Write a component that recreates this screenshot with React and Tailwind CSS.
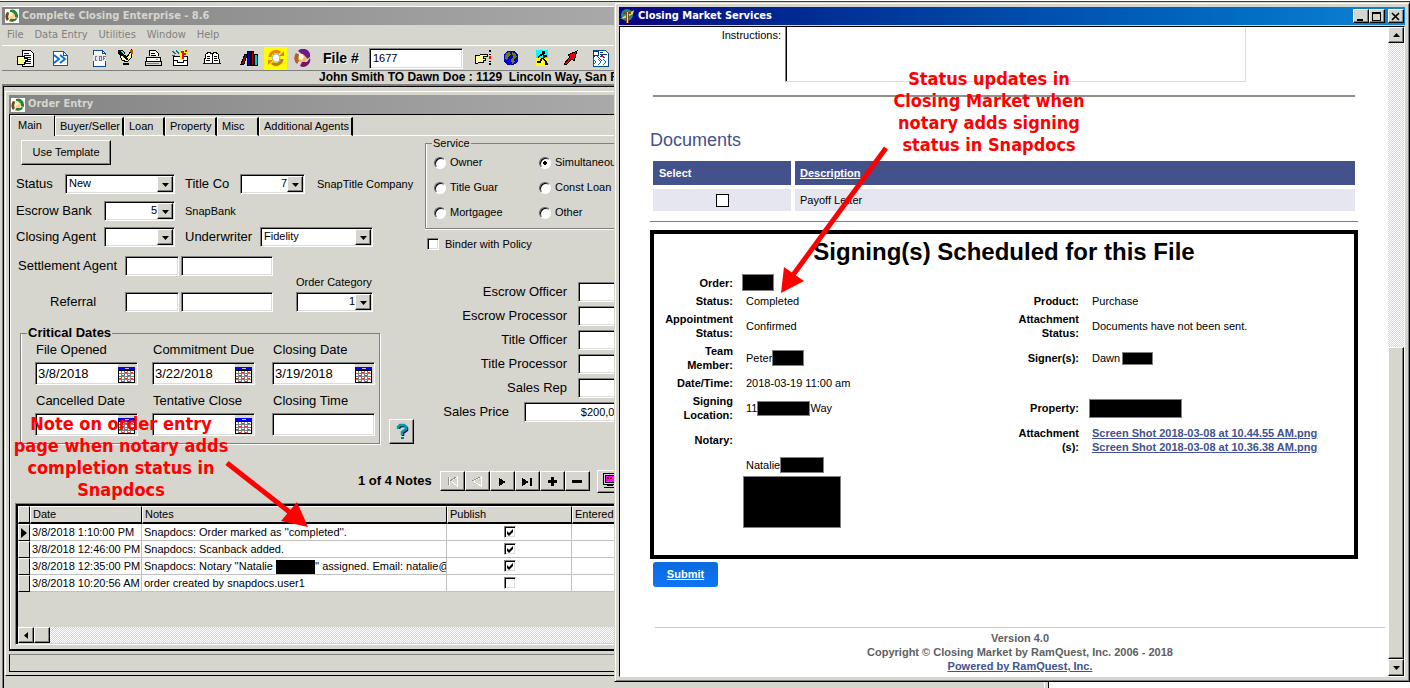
import React from "react";

const raised =
  "border border-t-white border-l-white border-r-black border-b-black shadow-[inset_-1px_-1px_0_#808080] bg-[#d6d6ce]";
const sunken =
  "border border-t-[#808080] border-l-[#808080] border-r-white border-b-white shadow-[inset_1px_1px_0_#000,inset_-1px_-1px_0_#dcdcdc] bg-white";
const tahoma = "font-['DejaVu_Sans_Condensed','DejaVu_Sans',sans-serif]";
const track =
  "bg-[repeating-conic-gradient(#ffffff_0_25%,#d6d6ce_0_50%)] bg-[length:2px_2px]";

/* ---------- icons ---------- */

function Icon({ children, size = 18 }) {
  return (
    <svg
      width={size}
      height={size}
      viewBox="0 0 18 18"
      shapeRendering="crispEdges"
      aria-hidden="true"
      className="shrink-0"
    >
      {children}
    </svg>
  );
}

function AppLogo() {
  return (
    <svg width="14" height="14" viewBox="0 0 14 14" aria-hidden="true" className="shrink-0">
      <rect width="14" height="14" fill="#fff" />
      <path d="M5 1a6 6 0 0 1 8 5v3l-3-1-1-3-4-2z" fill="#1f8a34" />
      <path d="M12 10a6 6 0 0 1-8 2l2-3 4 1 1-2z" fill="#2a7a2a" />
      <path d="M2 12a7 7 0 0 1 0-9l3 1-2 4 1 2z" fill="#6b4a1d" />
      <path d="M4 4l3-1 3 3-1 4-4 0-2-2z" fill="#f6cf8a" />
      <path d="M4 4l2-1 2 2-1 2-3 1z" fill="#fff4d8" />
    </svg>
  );
}

function MarketLogo() {
  return (
    <svg width="15" height="16" viewBox="0 0 15 16" aria-hidden="true" className="shrink-0">
      <circle cx="7" cy="7" r="6" fill="#1d8a86" />
      <path d="M0 11 L14 2 L13 6 L5 10z" fill="#e8e23a" />
      <path d="M3 4h8v2h-2v9H6V6H3z" fill="#7a4a22" />
      <path d="M7 4h1v11H7z" fill="#f0d890" />
    </svg>
  );
}

const icons = {
  listHand: (
    <Icon>
      <path d="M6 1h8l3 3v13H6z" fill="#fff" stroke="#000" />
      <path d="M8 4h5M8 6h7M9 8h6M9 10h6M9 12h6M9 14h6" stroke="#0000c0" />
      <path d="M1 7h7v2h3v2h-2v2h-1v2H1z" fill="#fff" stroke="#000" />
      <path d="M2 9h6v5H2z" fill="#ffff80" />
    </Icon>
  ),
  fastDoc: (
    <Icon>
      <path d="M2 2h10l4 4v10H2z" fill="#fff" stroke="#0a5aa8" />
      <path d="M12 2v4h4" fill="none" stroke="#0a5aa8" />
      <g shapeRendering="auto" fill="none" stroke="#0a6fd0" strokeWidth="2">
        <path d="M3 6l5 4-5 4M9 6l5 4-5 4" />
      </g>
    </Icon>
  ),
  cdf: (
    <Icon>
      <path d="M3 1h9l3 3v13H3z" fill="#fff" stroke="#0a4a98" />
      <path d="M12 1v3h3" fill="none" stroke="#0a4a98" />
      <rect x="3" y="6" width="13" height="6" fill="#e8e8f0" />
      <path d="M7 7H5v4h2M9 7v4h2V7H9M13 11V7h3M13 9h2" fill="none" stroke="#77777f" />
    </Icon>
  ),
  pencilHand: (
    <Icon>
      <path d="M1 1h4l3 3-3 3-4-3z" fill="#0ff" stroke="#000" />
      <path d="M14 2v7l-4 4-5-2-2-4 4-1 3 2z" fill="#ffffa0" stroke="#000" />
      <path d="M13 1h3v4h-2z" fill="#c05000" />
      <path d="M2 2l9 9" stroke="#000" strokeWidth="2" />
      <path d="M6 14h6v2H6z" fill="#000" />
    </Icon>
  ),
  printer: (
    <Icon>
      <path d="M5 7V1h6l3 3v3" fill="#fff" stroke="#000" />
      <path d="M7 4h4M7 6h5" stroke="#000" />
      <path d="M2 8h14v4H2z" fill="#fff" stroke="#000" />
      <path d="M1 12h16v4H1z" fill="#d6d6ce" stroke="#000" />
      <path d="M12 10h2" stroke="#c0a000" />
      <path d="M3 14h12" stroke="#808080" />
    </Icon>
  ),
  inbox: (
    <Icon>
      <path d="M2 7h14v9H2z" fill="#fff" stroke="#000" />
      <path d="M2 11h4v2h6v-2h4" fill="none" stroke="#000" />
      <path d="M9 3l4-2 4 1-3 4-2 5h-3V7z" fill="#ffff00" />
      <path d="M10 3h2v2h3M12 6v4M16 2h-2" fill="none" stroke="#f00" strokeWidth="2" />
      <path d="M1 2l4 3M5 1l3 4M1 6h3" stroke="#008080" />
    </Icon>
  ),
  openBook: (
    <Icon>
      <path d="M3 5l3-2 3 2 3-2 3 2 2 9H1z" fill="#fff" stroke="#000" />
      <path d="M9 5v9M4 7h3M4 9h3M3 11h4M11 7h3M11 9h3M11 11h4" stroke="#000" />
      <path d="M1 14h6l2 1 2-1h6" fill="none" stroke="#0000ff" />
    </Icon>
  ),
  books: (
    <Icon>
      <path d="M1 15l4-10 2 1-3 9z" fill="#a00000" stroke="#000" />
      <path d="M7 2h3v14H7z" fill="#0000d0" stroke="#000" />
      <path d="M11 2h2v14h-2z" fill="#a00000" stroke="#000" />
      <path d="M14 5h3v11h-3z" fill="#00c8c8" stroke="#000" />
    </Icon>
  ),
  refresh: (
    <Icon>
      <g shapeRendering="auto">
        <path d="M3 8a6 6 0 0 1 10-4" fill="none" stroke="#f08000" strokeWidth="3" />
        <path d="M15 10a6 6 0 0 1-10 4" fill="none" stroke="#c87820" strokeWidth="3" />
        <path d="M12 7h5V2zM6 11H1v5z" fill="#f08000" />
        <path d="M7 5h4l2 3-1 5H7L5 9z" fill="#fff" stroke="#5090c0" strokeWidth="0.7" />
      </g>
    </Icon>
  ),
  swirl: (
    <Icon>
      <g shapeRendering="auto">
        <path d="M5 2a7 7 0 0 1 12 6l-3 2-4-4z" fill="#6a1a8a" />
        <path d="M17 9a7 7 0 0 1-10 8l2-4 5 0z" fill="#7a1070" />
        <path d="M4 15a8 8 0 0 1-1-11l4 2-1 6z" fill="#b0602a" />
        <path d="M6 5l4 0 4 4-2 4-5 0-2-3z" fill="#f6b860" />
        <path d="M6 5l3 0 2 3-2 3-3-1z" fill="#fff8e0" />
      </g>
    </Icon>
  ),
  pointHand: (
    <Icon>
      <path d="M1 6h5l2-1h5v2H9v2h2v2H9v2H6L4 14H1z" fill="#ffffa0" stroke="#000" />
      <path d="M16 1v2M16 5v1M16 12v1M16 14v2" stroke="#000" strokeWidth="2" />
      <path d="M16 7v3" stroke="#f00" strokeWidth="2" />
    </Icon>
  ),
  globe: (
    <Icon>
      <circle cx="9" cy="9" r="7.5" fill="#0000d8" />
      <path d="M4 4l4-1 1 3-3 2-1 4-2-3zM10 3l4 2 1 3-3 2 1 3-3 2-1-5 2-2z" fill="#6b7a10" />
    </Icon>
  ),
  runner: (
    <Icon>
      <path d="M3 1h12v8H3z" fill="#0ff" />
      <path d="M3 9h12v8H3z" fill="#ff0" />
      <path d="M9 2h3v3H9z" fill="#000" />
      <path d="M8 6l2-1 1 4M10 9l3 4v2h2M9 9l-2 4H4M5 8l3-2M11 7h3" fill="none" stroke="#000" strokeWidth="1.5" />
    </Icon>
  ),
  redArrow: (
    <Icon>
      <path d="M15 2L6 6l2 2-6 7 2 1 6-6 2 2z" fill="#e80000" stroke="#000" />
    </Icon>
  ),
  searchDoc: (
    <Icon>
      <path d="M2 1h12l3 3v13H2z" fill="#fff" stroke="#0a4a88" />
      <path d="M2 2h5v4H2zM9 3h3M9 5h4M9 7h3M4 6l-2 3M6 7l5 5M13 5h3" fill="none" stroke="#0a3a78" />
      <path d="M10 6l4 3" stroke="#e00" />
      <path d="M2 10l3 3-3 3M7 10l3 3-3 3M12 10l3 3-3 3" fill="none" stroke="#0a6fd0" />
    </Icon>
  ),
  monitor: (
    <Icon>
      <path d="M2 1h13v11H2z" fill="#d6d6ce" stroke="#000" />
      <path d="M4 3h9v7H4z" fill="#0c0" stroke="#000" />
      <path d="M5 4h7v5H5z" fill="#f0f" />
      <path d="M6 5h2v2H6zM9 5h2v2H9z" fill="#800" />
      <path d="M6 13h6v1H6zM3 15h12v1H3z" fill="#000" />
    </Icon>
  ),
};

function Calendar() {
  return (
    <svg width="17" height="17" viewBox="0 0 17 17" shapeRendering="crispEdges" aria-hidden="true">
      <rect x="0" y="1" width="17" height="16" fill="#000" />
      <rect x="1" y="5" width="15" height="11" fill="#fff" />
      <rect x="0" y="1" width="17" height="3" fill="#0000ff" />
      <rect x="7" y="2" width="4" height="1" fill="#c0c0ff" />
      <path
        d="M3.500 5v11M6.500 5v11M9.500 5v11M12.500 5v11M1 7.500h15M1 10.500h15M1 13.500h15"
        stroke="#808080"
      />
      <path
        d="M4 9h2M7 6h2M10 9h2M13 6h2M4 15h2M7 12h2M10 15h2M13 12h2M1 12h2"
        stroke="#f03030"
      />
    </svg>
  );
}

function Triangle({ dir = "down" }) {
  const d = {
    down: "M1 3h7L4.500 7z",
    up: "M1 6h7L4.500 2z",
    left: "M6 1v7L2 4.500z",
  }[dir];
  return (
    <svg width="9" height="9" viewBox="0 0 9 9" aria-hidden="true">
      <path d={d} fill="#000" />
    </svg>
  );
}

/* ---------- form controls ---------- */

function Dropdown({ label, value, className, right }) {
  return (
    <span className={`relative block h-5 shrink-0 ${sunken} ${className}`}>
      <select
        aria-label={label}
        defaultValue={value}
        className={`block h-[17px] w-full appearance-none bg-transparent pl-[3px] pr-[17px] text-[11px] leading-[17px] outline-none ${
          right ? "text-right" : ""
        }`}
      >
        <option>{value}</option>
      </select>
      <span
        className={`pointer-events-none absolute right-px top-px bottom-px flex w-4 items-center justify-center ${raised}`}
      >
        <Triangle />
      </span>
    </span>
  );
}

function Field({ label, value = "", className = "" }) {
  return (
    <input
      aria-label={label}
      defaultValue={value}
      className={`h-5 shrink-0 px-[3px] text-[11px] outline-none ${sunken} ${className}`}
    />
  );
}

function DateField({ id, label, value, plain }) {
  return (
    <div>
      <label htmlFor={id} className="block h-[18px] pl-px leading-[18px] text-[13px]">
        {label}
      </label>
      <div className={`mt-[3px] flex h-[23px] w-[103px] items-center ${sunken}`}>
        <input
          id={id}
          defaultValue={value}
          className="min-w-0 flex-1 bg-transparent pl-[2px] text-[13px] outline-none"
        />
        {!plain && (
          <button aria-label={`Pick ${label}`} className="mr-px flex h-[19px] w-[18px] items-end bg-[#d6d6ce]">
            <Calendar />
          </button>
        )}
      </div>
    </div>
  );
}

function Radio({ label, checked }) {
  return (
    <label className="flex h-[25px] items-center gap-1">
      <input
        type="radio"
        name="service"
        defaultChecked={checked}
        className="h-3 w-3 shrink-0 appearance-none rounded-full border border-t-[#606060] border-l-[#606060] border-r-white border-b-white bg-white shadow-[inset_1px_1px_0_#000] checked:bg-[radial-gradient(circle,#000_2px,#fff_2px)]"
      />
      {label}
    </label>
  );
}

function Check({ label, checked }) {
  return (
    <span className="relative block h-3 w-3 shrink-0">
      <input
        type="checkbox"
        aria-label={label}
        defaultChecked={checked}
        className={`peer block h-3 w-3 appearance-none ${sunken}`}
      />
      <svg
        viewBox="0 0 12 12"
        className="pointer-events-none absolute inset-0 hidden h-3 w-3 peer-checked:block"
        aria-hidden="true"
      >
        <path d="M3 5l2 2 4-4v3L5 10 3 8z" fill="#000" />
      </svg>
    </span>
  );
}

/* ---------- Complete Closing Enterprise ---------- */

function Toolbar() {
  return (
    <div className="flex h-[25px] items-center border-t border-white pl-[14px]">
      <button aria-label="Order list">{icons.listHand}</button>
      <button aria-label="Forward document" className="ml-[17px]">{icons.fastDoc}</button>
      <button aria-label="CDF" className="ml-[21px]">{icons.cdf}</button>
      <button aria-label="Sign" className="ml-[9px]">{icons.pencilHand}</button>
      <button aria-label="Print" className="ml-[9px]">{icons.printer}</button>
      <button aria-label="Inbox" className="ml-[9px]">{icons.inbox}</button>
      <button aria-label="Open book" className="ml-[14px]">{icons.openBook}</button>
      <button aria-label="Library" className="ml-[19px]">{icons.books}</button>
      <button aria-label="Refresh" className="ml-[6px] flex h-[23px] w-[23px] items-center justify-center bg-[#ffff00]">
        {icons.refresh}
      </button>
      <button aria-label="Sync" className="ml-[6px]">{icons.swirl}</button>
      <label htmlFor="file-no" className="ml-3 w-[46px] text-[14px] font-bold [text-shadow:1px_1px_0_#fff]">
        File #
      </label>
      <input
        id="file-no"
        defaultValue="1677"
        className={`h-[21px] w-[94px] px-[3px] text-[11px] outline-none ${sunken}`}
      />
      <button aria-label="Point" className="ml-[11px]">{icons.pointHand}</button>
      <button aria-label="Web" className="ml-[10px]">{icons.globe}</button>
      <button aria-label="Exit" className="ml-[13px]">{icons.runner}</button>
      <button aria-label="Arrow" className="ml-[11px]">{icons.redArrow}</button>
      <button aria-label="Search documents" className="ml-[11px]">{icons.searchDoc}</button>
    </div>
  );
}

const tabs = [
  { label: "Buyer/Seller", cls: "w-[69px]" },
  { label: "Loan", cls: "w-[41px]" },
  { label: "Property", cls: "w-[52px]" },
  { label: "Misc", cls: "w-[42px]" },
  { label: "Additional Agents", cls: "w-[94px]" },
];

function TabRow() {
  return (
    <div className="flex h-[21px] items-end border-l border-white text-[11px]">
      <button className="h-[21px] w-[44px] border-r border-t border-r-black border-t-white pl-[7px] pb-[2px] text-left">
        Main
      </button>
      {tabs.map((t) => (
        <button
          key={t.label}
          className={`h-[19px] shrink-0 whitespace-nowrap border-b border-l border-r-2 border-t border-b-white border-l-white border-r-black border-t-white pl-[4px] text-left ${t.cls}`}
        >
          {t.label}
        </button>
      ))}
      <div className="h-px flex-1 bg-white" />
    </div>
  );
}

const officers = ["Escrow Officer", "Escrow Processor", "Title Officer", "Title Processor", "Sales Rep"];

function OrderForm() {
  return (
    <div className="flex items-start">
      <div className="w-[414px] shrink-0 pl-[5px] pt-1 text-[13px]">
        <button className={`ml-[5px] block h-[25px] w-[90px] text-[11px] ${raised}`}>Use Template</button>

        <div className="mt-[9px] flex h-5 items-center">
          <span className="w-[49px]">Status</span>
          <Dropdown label="Status" value="New" className="w-[110px]" />
          <span className="ml-[10px] w-[55px]">Title Co</span>
          <Dropdown label="Title Co" value="7" right className="w-[65px]" />
          <span className="ml-3 text-[11px]">SnapTitle Company</span>
        </div>
        <div className="mt-[7px] flex h-5 items-center">
          <span className="w-[88px]">Escrow Bank</span>
          <Dropdown label="Escrow Bank" value="5" right className="w-[71px]" />
          <span className="ml-[10px] text-[11px]">SnapBank</span>
        </div>
        <div className="mt-[6px] flex h-5 items-center">
          <span className="w-[88px]">Closing Agent</span>
          <Dropdown label="Closing Agent" value="" className="w-[71px]" />
          <span className="ml-[10px] w-[75px]">Underwriter</span>
          <Dropdown label="Underwriter" value="Fidelity" className="w-[113px]" />
        </div>
        <div className="mt-[9px] flex h-5 items-center">
          <span className="w-[109px] pl-[2px]">Settlement Agent</span>
          <Field label="Settlement agent code" className="w-[54px]" />
          <Field label="Settlement agent name" className="ml-[2px] w-[92px]" />
        </div>
        <div className="flex items-end">
          <span className="w-[109px] pl-[34px] leading-5">Referral</span>
          <Field label="Referral code" className="w-[54px]" />
          <Field label="Referral name" className="ml-[2px] w-[92px]" />
          <div className="ml-[23px]">
            <span className="block h-4 text-[11px] leading-3">Order Category</span>
            <Dropdown label="Order Category" value="1" right className="w-[77px]" />
          </div>
        </div>

        <div className="mt-[13px] flex items-end">
          <fieldset className="ml-1 w-[360px] border border-[#808080] pb-[7px] pl-[14px] shadow-[1px_1px_0_#fff,inset_1px_0_0_#fff]">
            <legend className="-ml-2 h-4 bg-[#d6d6ce] px-px font-bold leading-4">Critical Dates</legend>
            <div className="grid grid-cols-[117px_120px_103px] gap-y-[7px]">
              <DateField id="opened" label="File Opened" value="3/8/2018" />
              <DateField id="commit" label="Commitment Due" value="3/22/2018" />
              <DateField id="closing" label="Closing Date" value="3/19/2018" />
              <DateField id="cancelled" label="Cancelled Date" value="" />
              <DateField id="tentative" label="Tentative Close" value="" />
              <DateField id="time" label="Closing Time" value="" plain />
            </div>
          </fieldset>
          <button aria-label="Help" className={`ml-[9px] flex h-[25px] w-[25px] items-center justify-center ${raised}`}>
            <svg width="14" height="17" viewBox="0 0 14 17" aria-hidden="true">
              <path d="M4 6V5l2-2h4l2 2v2L8 10v3" fill="none" stroke="#000080" strokeWidth="2.500" />
              <path d="M3 6V4l2-2h4l2 2v2L7 9v3" fill="none" stroke="#00a0a0" strokeWidth="2.500" />
              <path d="M6 14h3v2H6z" fill="#008080" />
            </svg>
          </button>
        </div>
      </div>

      <div className="min-w-[260px] flex-1 pr-4 text-[11px]">
        <fieldset className="border border-[#808080] pb-[3px] pl-[8px] shadow-[inset_1px_0_0_#fff,0_1px_0_#fff]">
          <legend className="-ml-[2px] h-[14px] bg-[#d6d6ce] px-px leading-[14px]">Service</legend>
          <div className="grid grid-cols-[105px_105px]">
            <Radio label="Owner" />
            <Radio label="Simultaneous" checked />
            <Radio label="Title Guar" />
            <Radio label="Const Loan" />
            <Radio label="Mortgagee" />
            <Radio label="Other" />
          </div>
        </fieldset>
        <div className="mt-2 flex h-[14px] items-center gap-[6px] pl-[2px]">
          <Check label="Binder with Policy" />
          <span>Binder with Policy</span>
        </div>
        <div className="mt-[31px] flex flex-col gap-1">
          {officers.map((name) => (
            <label key={name} className="flex h-5 items-center">
              <span className="w-[142px] text-right text-[13px]">{name}</span>
              <Field label={name} className="ml-[11px] w-[210px]" />
            </label>
          ))}
          <label className="flex h-5 items-center">
            <span className="w-[84px] text-right text-[13px]">Sales Price</span>
            <Field label="Sales Price" value="$200,000.00" className="ml-[15px] w-[122px] text-right" />
          </label>
        </div>
      </div>
    </div>
  );
}

function NavButton({ label, children, off }) {
  return (
    <button
      aria-label={label}
      disabled={off}
      className={`flex h-5 w-[25px] items-center justify-center ${raised}`}
    >
      <svg width="13" height="11" viewBox="0 0 13 11" shapeRendering="crispEdges" aria-hidden="true">
        {children}
      </svg>
    </button>
  );
}

function NotesBar() {
  return (
    <div className="mt-[25px] flex h-6 items-center pl-[347px]">
      <span className="w-[82px] whitespace-nowrap text-[13px] font-bold">1 of 4 Notes</span>
      <NavButton label="First" off>
        <path d="M3 1v9M5 5l6-4v9z" fill="none" stroke="#fff" />
        <path d="M2 1v8M4 5l6-4" fill="none" stroke="#909090" />
      </NavButton>
      <NavButton label="Previous" off>
        <path d="M2 5l8-4v9z" fill="none" stroke="#fff" />
        <path d="M1 5l8-4" fill="none" stroke="#909090" />
      </NavButton>
      <NavButton label="Next">
        <path d="M3 2l7 4-7 4z" fill="#000" />
      </NavButton>
      <NavButton label="Last">
        <path d="M1 2l7 4-7 4zM9 2h2v8H9z" fill="#000" />
      </NavButton>
      <NavButton label="Add">
        <path d="M5 1h3v3h3v3H8v3H5V7H2V4h3z" fill="#000" />
      </NavButton>
      <NavButton label="Remove">
        <path d="M1 4h10v3H1z" fill="#000" />
      </NavButton>
      <button aria-label="Workstation" className={`ml-[7px] flex h-[23px] w-[25px] items-center justify-center ${raised}`}>
        {icons.monitor}
      </button>
    </div>
  );
}

const notes = [
  { date: "3/8/2018 1:10:00 PM", note: "Snapdocs: Order marked as ''completed''.", publish: true },
  { date: "3/8/2018 12:46:00 PM", note: "Snapdocs: Scanback added.", publish: true },
  {
    date: "3/8/2018 12:35:00 PM",
    note: (
      <>
        Snapdocs: Notary ''Natalie{" "}
        <span className="inline-block h-[14px] w-[39px] bg-black align-middle" />
        '' assigned. Email: natalie@to
      </>
    ),
    publish: true,
  },
  { date: "3/8/2018 10:20:56 AM", note: "order created by snapdocs.user1", publish: false },
];

const headCell =
  "h-[18px] border-b-2 border-l border-r border-t border-b-black border-l-white border-r-black border-t-white bg-[#d6d6ce] px-[2px] text-left font-normal";
const bodyCell =
  "h-[17px] overflow-hidden whitespace-nowrap border-b border-r border-[#c0c0c0] bg-white pl-[2px] leading-4";

function NotesGrid() {
  return (
    <div className="mb-1 ml-[4px] mr-1 mt-[10px] flex min-h-[120px] flex-1 flex-col border border-[#808080] border-b-white border-r-white">
      <div className="flex flex-1 flex-col border-l-2 border-t-2 border-black">
        <table className="w-full table-fixed border-separate border-spacing-0 text-[11px] leading-[15px]">
          <colgroup>
            <col className="w-[12px]" />
            <col className="w-[112px]" />
            <col className="w-[305px]" />
            <col className="w-[125px]" />
            <col />
          </colgroup>
          <thead>
            <tr>
              <th className={headCell} />
              <th className={headCell}>Date</th>
              <th className={headCell}>Notes</th>
              <th className={headCell}>Publish</th>
              <th className={headCell}>Entered By</th>
            </tr>
          </thead>
          <tbody>
            {notes.map((n, i) => (
              <tr key={n.date}>
                <td className="h-[17px] border border-b-black border-l-white border-r-black border-t-white bg-[#d6d6ce] pl-[2px]">
                  {i === 0 && (
                    <svg width="7" height="10" viewBox="0 0 7 10" aria-hidden="true" className="block">
                      <path d="M0 0l6 5-6 5z" fill="#000" />
                    </svg>
                  )}
                </td>
                <td className={bodyCell}>{n.date}</td>
                <td className={bodyCell}>{n.note}</td>
                <td className={bodyCell}>
                  <div className="flex justify-center">
                    <Check label={`Publish ${n.date}`} checked={n.publish} />
                  </div>
                </td>
                <td className={bodyCell} />
              </tr>
            ))}
          </tbody>
        </table>
        <div className={`mb-px mt-auto flex h-4 ${track}`}>
          <button aria-label="Scroll left" className={`flex h-4 w-4 items-center justify-center ${raised}`}>
            <Triangle dir="left" />
          </button>
          <span className={`h-4 w-4 ${raised}`} />
        </div>
      </div>
    </div>
  );
}

function EnterpriseWindow() {
  return (
    <section className="absolute inset-y-0 left-0 right-[361px] flex flex-col overflow-hidden border-r border-black bg-[#d6d6ce] pl-[2px] shadow-[inset_-3px_0_0_#d6d6ce,inset_-4px_0_0_#fff]">
      <div className="h-[5px] border-b border-white" />
      <header className={`flex h-[18px] items-center gap-[3px] bg-linear-to-r from-[#848484] to-[#c4c4c4] pl-[3px] text-[11px] font-bold text-[#d6d6ce] ${tahoma}`}>
        <AppLogo />
        Complete Closing Enterprise - 8.6
      </header>
      <nav className={`flex h-5 items-center gap-[11px] pl-[5px] text-[11px] text-[#808080] ${tahoma}`}>
        <button>File</button>
        <button>Data Entry</button>
        <button>Utilities</button>
        <button>Window</button>
        <button>Help</button>
      </nav>
      <Toolbar />
      <div className="h-[14px] overflow-hidden whitespace-pre border-t border-[#808080] pl-[317px] text-[12px] font-bold leading-[13px]">
        John Smith TO Dawn Doe : 1129  Lincoln Way, San Francisco
      </div>

      <div className="flex min-h-0 flex-1 flex-col border-l border-t-2 border-[#808080]">
        <div className="flex min-h-0 flex-1 flex-col border-l border-t border-black pb-3 pl-px pt-[4px]">
          <div className="mr-3 flex min-h-0 flex-1 flex-col border border-b-black border-l-white border-r-black border-t-white px-[3px] pb-[3px] pt-[3px]">
            <header className={`flex h-5 items-center gap-[3px] border-b border-black bg-linear-to-r from-[#848484] to-[#c4c4c4] pl-[2px] text-[11px] font-bold text-[#d6d6ce] ${tahoma}`}>
              <AppLogo />
              Order Entry
            </header>
            <div className="flex min-h-0 flex-1 flex-col border-b-2 border-l border-black">
              <TabRow />
              <div className="flex min-h-0 flex-1 flex-col border-l border-white">
                <OrderForm />
                <NotesBar />
                <NotesGrid />
              </div>
            </div>
            <div className="mt-[3px] h-[18px] border border-b-black border-l-black border-r-white border-t-[#808080]" />
          </div>
        </div>
      </div>
    </section>
  );
}

/* ---------- Closing Market Services ---------- */

function Redacted({ className }) {
  return <span className={`inline-block shrink-0 border border-[#808080] bg-black ${className}`} />;
}

function Term({ children, className = "" }) {
  return <dt className={`self-center text-right font-bold ${className}`}>{children}</dt>;
}

function SigningBox() {
  return (
    <section className="mr-[30px] mt-2 min-h-[329px] border-4 border-black">
      <h2 className="h-[40px] text-center text-[24px] font-bold leading-[36px]">
        Signing(s) Scheduled for this File
      </h2>
      <dl className="grid grid-cols-[79px_1fr_66px_262px] grid-rows-[18px_18px_32px_32px_18px_32px_32px_18px_auto] gap-x-[13px] text-[11px] leading-[14px]">
        <Term>Order:</Term>
        <dd className="-ml-1"><Redacted className="h-[17px] w-8" /></dd>
        <span />
        <span />

        <Term>Status:</Term>
        <dd className="self-center">Completed</dd>
        <Term>Product:</Term>
        <dd className="self-center">Purchase</dd>

        <Term>Appointment Status:</Term>
        <dd className="self-center">Confirmed</dd>
        <Term>Attachment Status:</Term>
        <dd className="self-center">Documents have not been sent.</dd>

        <Term className="pl-6">Team Member:</Term>
        <dd className="flex items-center">Peter<Redacted className="h-4 w-8" /></dd>
        <Term>Signer(s):</Term>
        <dd className="flex items-center gap-[2px]">Dawn<Redacted className="h-[13px] w-[31px]" /></dd>

        <Term>Date/Time:</Term>
        <dd className="self-center">2018-03-19 11:00 am</dd>
        <span />
        <span />

        <Term>Signing Location:</Term>
        <dd className="flex items-center">11<Redacted className="h-[15px] w-[53px]" />Way</dd>
        <Term>Property:</Term>
        <dd className="-ml-[3px] flex items-center"><Redacted className="h-[19px] w-[93px]" /></dd>

        <Term>Notary:</Term>
        <span />
        <Term>Attachment<wbr />(s):</Term>
        <dd className="self-center font-bold text-[#43528b] underline">
          <a href="#shot-1" className="block">Screen Shot 2018-03-08 at 10.44.55 AM.png</a>
          <a href="#shot-2" className="block">Screen Shot 2018-03-08 at 10.36.38 AM.png</a>
        </dd>

        <dd className="col-start-2 flex items-center">Natalie<Redacted className="h-4 w-[44px]" /></dd>
        <dd className="col-start-2 -ml-[3px] pt-[2px]"><Redacted className="h-[52px] w-[98px]" /></dd>
      </dl>
    </section>
  );
}

function MarketWindow() {
  const sys = `flex h-[14px] w-4 items-center justify-center ${raised}`;
  return (
    <section className="absolute bottom-[6px] left-[614px] right-0 top-0 flex flex-col border border-b-black border-l-[#d6d6ce] border-r-black border-t-[#d6d6ce] bg-[#d6d6ce] px-1 pb-[4px] pt-[4px] shadow-[inset_1px_1px_0_#fff,inset_-1px_-1px_0_#808080]">
      <header className={`flex h-[18px] shrink-0 items-center gap-[3px] bg-linear-to-r from-[#0a0080] to-[#1084d6] px-px text-[11px] font-bold text-white ${tahoma}`}>
        <MarketLogo />
        Closing Market Services
        <button aria-label="Minimize" className={`ml-auto ${sys}`}>
          <svg width="10" height="9" viewBox="0 0 10 9"><path d="M1 7h6v2H1z" /></svg>
        </button>
        <button aria-label="Maximize" className={`-ml-[3px] ${sys}`}>
          <svg width="10" height="9" viewBox="0 0 10 9" shapeRendering="crispEdges">
            <path d="M0 0h9v9H0zM1 2v6h7V2z" fillRule="evenodd" />
          </svg>
        </button>
        <button aria-label="Close" className={sys}>
          <svg width="10" height="9" viewBox="0 0 10 9">
            <path d="M1 1l7 7M8 1l-7 7" stroke="#000" strokeWidth="1.700" />
          </svg>
        </button>
      </header>

      <div className="mt-px flex min-h-0 flex-1 border border-b-white border-l-black border-r-white border-t-black bg-white">
        <div className="flex min-w-0 flex-1 flex-col pl-[30px]">
          <div className="flex h-[55px] shrink-0 text-[11px]">
            <label htmlFor="instructions" className="w-[131px] text-right leading-4">Instructions:</label>
            <textarea
              id="instructions"
              className="ml-1 w-[461px] resize-none border-b border-l border-r border-b-[#dcdcdc] border-l-[#808080] border-r-[#dcdcdc] shadow-[inset_1px_0_0_#000] outline-none"
            />
          </div>
          <hr className="ml-[3px] mr-[33px] mt-[13px] border-t-2 border-[#909088]" />
          <h2 className="mt-[32px] text-[18px] leading-[22px] text-[#43528b]">Documents</h2>
          <table className="ml-[3px] mr-[33px] mt-[10px] table-fixed border-separate border-spacing-0 text-[11px]">
            <colgroup>
              <col className="w-[142px]" />
              <col />
            </colgroup>
            <thead>
              <tr className="text-left text-white">
                <th className="h-7 border-b-4 border-r-4 border-white bg-[#43528b] pl-[6px]">Select</th>
                <th className="h-7 border-b-4 border-white bg-[#43528b] pl-[5px]">
                  <a href="#description" className="underline">Description</a>
                </th>
              </tr>
            </thead>
            <tbody>
              <tr>
                <td className="h-[22px] border-r-4 border-white bg-[#e6e6f0]">
                  <input
                    type="checkbox"
                    aria-label="Payoff Letter"
                    className="mx-auto block h-[13px] w-[13px] appearance-none border border-black bg-white"
                  />
                </td>
                <td className="h-[22px] bg-[#e6e6f0] pl-[5px]">Payoff Letter</td>
              </tr>
            </tbody>
          </table>
          <hr className="mr-[30px] mt-[10px] border-[#808080]" />
          <SigningBox />
          <a
            href="#submit"
            className="ml-[3px] mt-[3px] flex h-[25px] w-[65px] shrink-0 items-center justify-center rounded-[3px] bg-linear-to-b from-[#0a6be0] to-[#0f74f4] text-[11px] font-bold text-white underline"
          >
            Submit
          </a>
          <footer className="ml-[5px] mr-[3px] mt-auto border-t border-[#c8c8c8] pb-[3px] pt-[3px] text-center text-[11px] font-bold leading-[14px] text-[#606060]">
            <p>Version 4.0</p>
            <p>Copyright © Closing Market by RamQuest, Inc. 2006 - 2018</p>
            <a href="#ramquest" className="text-[#43528b] underline">Powered by RamQuest, Inc.</a>
          </footer>
        </div>

        <div className={`flex w-4 shrink-0 flex-col ${track}`}>
          <button aria-label="Scroll up" className={`flex h-4 items-center justify-center ${raised}`}>
            <Triangle dir="up" />
          </button>
          <span className="flex-[49]" />
          <span className={`flex-[50] ${raised}`} />
          <button aria-label="Scroll down" className={`flex h-[17px] items-center justify-center ${raised}`}>
            <Triangle />
          </button>
        </div>
      </div>
    </section>
  );
}

/* ---------- callouts ---------- */

function Callouts() {
  const text = `absolute text-center text-[18px] font-bold leading-[22px] text-[#ff0000] ${tahoma}`;
  return (
    <div className="pointer-events-none absolute inset-0">
      <svg className="absolute inset-0 h-full w-full" aria-hidden="true">
        <g stroke="#ff0000" strokeWidth="5" fill="#ff0000">
          <path d="M886 146L793 273" />
          <path d="M227 461L292 512" />
        </g>
        <path d="M784 265l20 14-23 12z" fill="#ff0000" />
        <path d="M297 500l-16 19 27 6z" fill="#ff0000" />
      </svg>
      <p className={`left-[879px] top-[66px] w-[220px] ${text}`}>
        Status updates in
        <br />
        Closing Market when
        <br />
        notary adds signing
        <br />
        status in Snapdocs
      </p>
      <p className={`left-[11px] top-[411px] w-[220px] ${text}`}>
        Note on order entry
        <br />
        page when notary adds
        <br />
        completion status in
        <br />
        Snapdocs
      </p>
    </div>
  );
}

export default function App() {
  return (
    <div className="flex min-h-screen flex-col overflow-hidden bg-white pt-px font-['Liberation_Sans',Arial,sans-serif] text-black">
      <div className="h-px bg-[#40382c]" />
      <main className="relative min-h-[680px] flex-1">
        <EnterpriseWindow />
        <MarketWindow />
        <Callouts />
      </main>
    </div>
  );
}
